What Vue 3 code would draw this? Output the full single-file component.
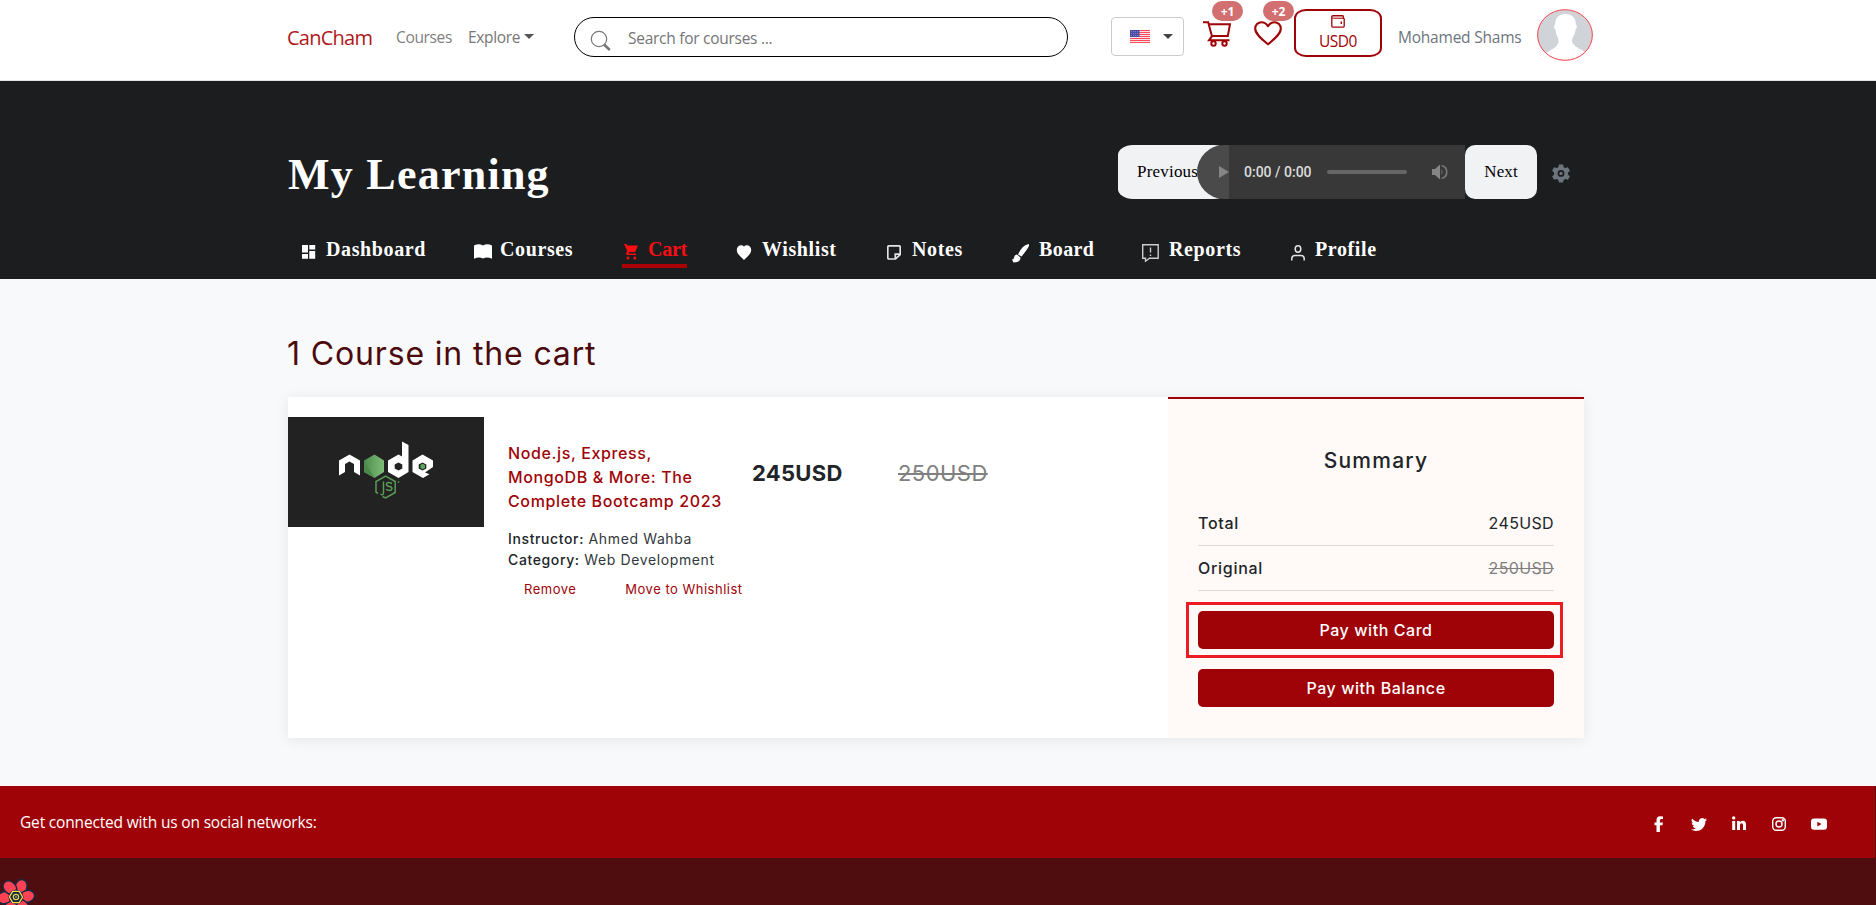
<script setup>
const tabs = [
  { id: 'dashboard', label: 'Dashboard' },
  { id: 'courses', label: 'Courses' },
  { id: 'cart', label: 'Cart' },
  { id: 'wishlist', label: 'Wishlist' },
  { id: 'notes', label: 'Notes' },
  { id: 'board', label: 'Board' },
  { id: 'reports', label: 'Reports' },
  { id: 'profile', label: 'Profile' },
]
const stripes = [0, 2, 4, 6, 8, 10, 12]
const petals = [0, 60, 120, 180, 240, 300]
</script>

<template>
  <div class="page">
    <header class="top">
      <a class="brand">CanCham</a>
      <a class="link courses">Courses</a>
      <a class="link explore">Explore<i class="caret"></i></a>
      <div class="search">
        <svg width="22" height="22" viewBox="0 0 22 22" fill="none" stroke="#777">
          <circle cx="9" cy="9" r="7.7" stroke-width="1.2" />
          <path d="M14 14.5 19.8 20" stroke-width="2.6" />
        </svg>
        <span>Search for courses ...</span>
      </div>
      <div class="lang">
        <svg width="20" height="13" viewBox="0 0 20 13">
          <rect width="20" height="13" fill="#ffe3e6" />
          <rect v-for="y in stripes" :key="y" :y="y" width="20" height="1" fill="#ff4a5c" />
          <rect width="9.5" height="7" fill="#4c4ca0" />
          <path d="M1 1.5h8M1 3.5h8M1 5.5h8" stroke="#8f8fd0" stroke-width=".7" stroke-dasharray="1 1" />
        </svg>
        <i class="caret"></i>
      </div>
      <div class="action cart-action">
        <svg width="28" height="26" viewBox="0 0 28 26" fill="none" stroke="#a00307" stroke-width="2">
          <path d="M0 1.2h5.2L9 15.5M6 3.2h21l-2.2 11.9H9L6 19.3h20.5" />
          <circle cx="10.5" cy="22.5" r="2.2" /><circle cx="21.5" cy="22.5" r="2.2" />
        </svg>
        <span class="badge">+1</span>
      </div>
      <div class="action heart-action">
        <svg width="28" height="25" viewBox="0 0 28 25" fill="none" stroke="#a00307" stroke-width="2.1" stroke-linejoin="round">
          <path d="M14 23.3C6 17 1.2 12.5 1.2 7.6 1.2 4 4 1.2 7.4 1.2c3 0 5.300 1.800 6.600 4C15.300 3 17.600 1.200 20.600 1.200 24 1.200 26.800 4 26.800 7.600c0 4.900-4.800 9.400-12.800 15.700z" />
        </svg>
        <span class="badge">+2</span>
      </div>
      <div class="wallet">
        <svg width="14" height="13" viewBox="0 0 14 13" fill="none" stroke="#a00307" stroke-width="1.3">
          <rect x=".8" y="3.300" width="12.400" height="8.800" rx=".8" />
          <path d="M.8 3.500V2Q.8.7 2 .7h9.500q.8 0 .8 .8v1.800" fill="#e3b3b4" />
          <path d="M10.300 6.500v2.500" stroke-width="1.400" />
        </svg>
        <span>USD0</span>
      </div>
      <span class="user">Mohamed Shams</span>
      <svg class="avatar" width="56" height="52" viewBox="0 0 56 52">
        <defs><clipPath id="face"><ellipse cx="28" cy="26" rx="27" ry="25" /></clipPath></defs>
        <ellipse cx="28" cy="26" rx="27.300" ry="25.300" fill="#d0d3d7" />
        <path clip-path="url(#face)" fill="#fff" d="M28.500 5c7 0 10.500 4.500 10.300 10.500 1.600.6 1.200 4-.3 5.500-.5 5-3.500 7.500-3.500 10.500 0 5 6 7 12 11V52H8V45c6-5 13.500-6 13.500-13 0-3.500-2.500-6-3-11-1.700-1.500-2-5-.2-5.600C18 9.500 21.500 5 28.500 5z" />
        <ellipse cx="28" cy="26" rx="27.400" ry="25.300" fill="none" stroke="#f8444a" />
      </svg>
    </header>

    <section class="hero">
      <div class="hero-row">
        <h1>My Learning</h1>
        <div class="player">
          <button class="prev">Previous</button>
          <div class="audio">
            <span class="knob"><i></i></span>
            <span class="time">0:00 / 0:00</span>
            <span class="track"></span>
            <svg width="17" height="16" viewBox="0 0 17 16">
              <path d="M1 5h3l5-4.500v15L4 11H1z" fill="#858585" />
              <path d="M10.500 5q2 3 0 6z" fill="#777" /><path d="M10.500 1.500c7 1.800 7 11.200 0 13" fill="none" stroke="#777" stroke-width="1.700" />
            </svg>
          </div>
          <button class="next">Next</button>
        </div>
        <svg class="gear" width="18" height="19" viewBox="0 0 18 19">
          <path fill="#6c757d" fill-rule="evenodd" d="M7 .5h4l.7 2.700 1.500.9 2.700-.8 2 3.400-2 2v1.700l2 2-2 3.400-2.700-.8-1.500.9-.7 2.700H7l-.7-2.700-1.500-.9-2.700.8-2-3.400 2-2V8.700l-2-2 2-3.400 2.700.8 1.500-.9zM9 6a3.400 3.400 0 1 0 0 6.800A3.400 3.400 0 0 0 9 6zM9 7.700a1.700 1.700 0 1 1 0 3.400 1.700 1.700 0 0 1 0-3.400z" />
        </svg>
      </div>
      <nav class="tabs">
        <a v-for="t in tabs" :key="t.id" :class="['tab', t.id, { active: t.id === 'cart' }]">
          <svg v-if="t.id === 'dashboard'" width="14" height="15" viewBox="0 0 14 15" fill="#fff"><path d="M0 1h6v7.500H0zM7.300 1h5.900v4.500H7.300zM0 10h6v4.800H0zM7.300 7h5.900v7.800H7.300z" /></svg>
          <svg v-else-if="t.id === 'courses'" width="18" height="15" viewBox="0 0 18 15" fill="#fff"><path d="M0 1.500Q5-1 9 1.500q4-2.500 9 0v13.300Q13 12.500 9 14.500 5 12.500 0 14.800z" /></svg>
          <svg v-else-if="t.id === 'cart'" width="14" height="16" viewBox="0 0 14 16" fill="#fb0d12"><path d="M0 0h2.400l.8 1.600H14L11.200 8H5l-.7 1.500H12V11H3Q1.500 10.500 2.300 9L3.300 7z" /><circle cx="4" cy="14" r="1.500" /><circle cx="10.800" cy="14" r="1.500" /></svg>
          <svg v-else-if="t.id === 'wishlist'" width="16" height="17" viewBox="0 0 16 17" fill="#fff"><path d="M8 2.500C6 0 .8 1 .8 6 .8 10 5 13 8 16c3-3 7.200-6 7.200-10C15.200 1 10 0 8 2.500z" /></svg>
          <svg v-else-if="t.id === 'notes'" width="14" height="17" viewBox="0 0 14 17" fill="none" stroke="#e4e4e4" stroke-width="1.700"><path d="M2 1.800h10q1.200 0 1.200 1.200v7.500L8.500 15H2Q.8 15 .8 13.800V3Q.8 1.800 2 1.800zM8.300 15v-4.800h4.900" /></svg>
          <svg v-else-if="t.id === 'board'" width="17" height="19" viewBox="0 0 17 19" fill="#fff"><path d="M17 0q1.500 2-7.500 12.500L6 10.500Q10 1 17 0zM5 10.500l3.500 3Q8.500 18.500 1.500 18.500L0 15.500q2 0 2-2 .5-2.800 3-3z" /></svg>
          <svg v-else-if="t.id === 'reports'" width="17" height="18" viewBox="0 0 17 18" fill="none" stroke="#ccc" stroke-width="1.400"><path d="M.7.7h15.500v13.500H7.500l-4 3v-3H.7z" /><path d="M8.500 3.500v5M8.500 10.500V12" /></svg>
          <svg v-else width="14" height="17" viewBox="0 0 14 17" fill="none" stroke="#e4e4e4" stroke-width="1.500"><ellipse cx="7" cy="5" rx="2.800" ry="3.200" /><path d="M.8 16.500V14.500Q1 11.500 4 11.500h6q3 0 3.200 3v2" /></svg>
          <span>{{ t.label }}</span>
        </a>
      </nav>
    </section>

    <main>
      <h2>1 Course in the cart</h2>
      <div class="card">
        <div class="items">
          <svg class="thumb" width="196" height="110" viewBox="0 0 196 110">
            <defs><linearGradient id="hex" x1="0" x2="1"><stop offset="0" stop-color="#4c8a4b" /><stop offset=".5" stop-color="#66a663" /><stop offset="1" stop-color="#7dbb78" /></linearGradient></defs>
            <rect width="196" height="110" fill="#222" />
            <path fill="#fff" fill-rule="evenodd" d="M51 58.500V43.500l10.500-6L72 43.500v15l-6-3.500V47l-4.500-2.500L57 47v8zM100 43.500l10.500-6 3.500 2V24.500l6.500 3.500V55L110.500 61 100 55zM110.500 45.500l-3.800 2v4l3.800 2 3.800-2v-4zM124.500 43.500l10-6 10.500 6V50l-8 5.500 4.500 1.800L135 61l-10.500-6zM134.500 45.500l-3.800 2v4l3.800 2 3.800-2v-4z" />
            <path d="M76 43.500l10.500-6L96 43.500V55L86.500 61 76 55z" fill="url(#hex)" />
            <path d="M76 43.500 86 60 76 55z" fill="#4a8b4c" />
            <path d="M134.700 46.800 137 48v3l-2.300 1.200-2.300-1.200v-3z" fill="#5fa75c" />
            <g fill="none" stroke="#599c56" stroke-width="1.500"><path d="M90 76.500 88 75.200V64.500l9.600-5.500 9.600 5.500V75.500L97.600 81l-3-1.500M95.500 64.500v11q0 3.500-3 1.500M104 66.500q-5-2.500-5.500.8.300 2 3 2.200 2.600.3 2.500 2.300-.8 3-6 .6" /></g>
            <circle cx="110.500" cy="65" r="1" fill="#487d46" />
          </svg>
          <div class="info">
            <p class="name">Node.js, Express,<br>MongoDB &amp; More: The<br><span>Complete Bootcamp 2023</span></p>
            <p class="meta"><b>Instructor:</b> Ahmed Wahba</p>
            <p class="meta"><b>Category:</b> Web Development</p>
            <div class="ops"><a>Remove</a><a>Move to Whishlist</a></div>
          </div>
          <span class="price">245USD</span>
          <s class="old">250USD</s>
        </div>
        <aside class="summary">
          <h3>Summary</h3>
          <div class="row"><b>Total</b><span>245USD</span></div>
          <div class="row"><b>Original</b><s>250USD</s></div>
          <div class="highlight"><button class="pay">Pay with Card</button></div>
          <button class="pay">Pay with Balance</button>
        </aside>
      </div>
    </main>

    <footer>
      <div class="social">
        <span>Get connected with us on social networks:</span>
        <div class="icons">
          <svg width="16" height="16" viewBox="0 0 16 16" fill="#fff"><path d="M5.500 16V9.300H3.500V6.400h2V4.200Q5.500.3 9 .2q1.500 0 3 .2v2.500h-1.700Q8.900 3 8.900 4.300v2.100h3l-.5 2.900H8.900V16z" /></svg>
          <svg width="16" height="16" viewBox="0 0 16 16" fill="#fff"><path d="M5.026 15c6.038 0 9.341-5.003 9.341-9.334 0-.14 0-.282-.006-.422A6.700 6.700 0 0 0 16 3.542a6.700 6.700 0 0 1-1.889.518 3.300 3.300 0 0 0 1.447-1.817 6.500 6.500 0 0 1-2.087.793A3.286 3.286 0 0 0 7.875 6.030a9.320 9.320 0 0 1-6.767-3.429 3.290 3.290 0 0 0 1.018 4.382A3.300 3.300 0 0 1 .64 6.575v.045a3.290 3.290 0 0 0 2.632 3.218 3.200 3.200 0 0 1-.865.115 3 3 0 0 1-.614-.057 3.280 3.280 0 0 0 3.067 2.277A6.600 6.600 0 0 1 .780 13.580a6 6 0 0 1-.780-.045A9.340 9.340 0 0 0 5.026 15" /></svg>
          <svg width="16" height="16" viewBox="0 0 16 16" fill="#fff"><circle cx="2.700" cy="1.900" r="1.700" /><path d="M1.200 4.900h3V14h-3zM6 4.900h2.800v1.300q1-1.500 2.900-1.500 3.300 0 3.300 4V14h-3V9.300q0-2-1.500-2Q9 7.400 9 9.300V14H6z" /></svg>
          <svg width="16" height="16" viewBox="0 0 16 16" fill="none" stroke="#fff" stroke-width="1.400"><rect x="1.700" y="1.700" width="12.600" height="12.600" rx="3.500" /><circle cx="8" cy="8" r="3" /><circle cx="11.800" cy="4.200" r=".5" /></svg>
          <svg width="16" height="16" viewBox="0 0 16 16"><rect y="2.500" width="16" height="11.300" rx="3" fill="#fff" /><path d="M6.300 5.800v4.600L10.500 8.100z" fill="#a00307" /></svg>
        </div>
      </div>
      <svg class="flower" width="38" height="26" viewBox="0 0 38 26">
        <g transform="translate(16 18)">
          <g v-for="a in petals" :key="a" :transform="`rotate(${a + 30})`"><path d="M-4.500-6C-8-11-7.500-16.500-2.500-18.500 4-19.500 7-11 4.500-6z" fill="#ff4154" stroke="#112a43" stroke-width="1.400" /></g>
          <path d="M-4-6.500h8L8 0 4 6.500h-8L-8 0z" fill="#112a43" />
          <path d="M-3.300-5.700h6.600L6.600 0 3.300 5.700h-6.600L-6.600 0z" fill="none" stroke="#ffd94c" stroke-width="1.300" />
          <circle r="2.700" fill="none" stroke="#e5d34c" stroke-width="1.200" /><circle r=".8" fill="#ffd94c" />
        </g>
      </svg>
    </footer>
  </div>
</template>

<style>
html, body { margin: 0; overflow: hidden; }
</style>

<style scoped>
.page { width: 1876px; height: 905px; overflow: hidden; background: #f8f9fb; color: #212529; font: 16px/24px "Open Sans", "Noto Sans", sans-serif; display: flex; flex-direction: column; }
.page * { box-sizing: border-box; white-space: nowrap; }
h1, h2, h3, p { margin: 0; }
svg { display: block; flex: none; }
button { border: 0; padding: 0; font: inherit; letter-spacing: inherit; }

.top { height: 81px; flex: none; background: #fff; border-bottom: 1px solid #dfe3e6; padding-left: 287px; display: flex; align-items: flex-start; }
.brand { width: 109px; margin-top: 25px; font-size: 20px; line-height: 26px; letter-spacing: -.75px; color: #b0171c; }
.link { margin-top: 25px; color: #7f7f7f; font-size: 15.500px; letter-spacing: -.35px; }
.link.courses { width: 72px; }
.explore { width: 106px; display: flex; gap: 4px; color: #777; }
.caret { display: block; width: 10px; height: 5px; background: #555; clip-path: polygon(0 0, 100% 0, 50% 100%); }
.explore .caret { margin-top: 9px; }
.search { width: 494px; height: 40px; margin-top: 17px; border: 1px solid #000; border-radius: 20px; display: flex; color: #757575; padding-left: 15px; gap: 16px; }
.search svg { margin-top: 12px; }
.search span { margin-top: 8px; font-size: 15.500px; letter-spacing: -.27px; }
.lang { width: 73px; height: 39px; margin: 17px 19px 0 43px; border: 1px solid #ccc; border-radius: 4px; display: flex; justify-content: space-between; padding: 12px 10px 0 18px; }
.lang .caret { margin-top: 4px; background: #444; }
.action { position: relative; padding-top: 21px; height: 60px; }
.cart-action { width: 51px; }
.heart-action { width: 40px; }
.badge { position: absolute; top: 1px; left: 9px; width: 31px; height: 20px; border-radius: 10px; background: #d27071; color: #fff; font: bold 12px/21px "Noto Sans", sans-serif; text-align: center; }
.wallet { width: 88px; height: 48px; margin: 9px 16px 0 0; border: 2px solid #a00307; border-radius: 12px / 9px; color: #a00307; display: flex; flex-direction: column; align-items: center; padding-top: 4px; }
.wallet span { font-size: 15.500px; letter-spacing: -.5px; line-height: 24px; margin-top: 1px; }
.user { width: 139px; margin-top: 25px; color: #6c757d; font-size: 15.500px; letter-spacing: -.22px; }
.avatar { margin-top: 9px; }

.hero { height: 198px; flex: none; background: #1c1d1f; padding: 64px 0 0 288px; font-family: "Liberation Serif", serif; }
.hero-row { display: flex; height: 54px; }
h1 { width: 830px; font-size: 44px; line-height: 60px; color: #fff; letter-spacing: 1.25px; }
.player { display: flex; width: 419px; }
.prev { width: 111px; background: #f1f2f4; border-radius: 15px / 10px; color: #000; font-size: 17px; letter-spacing: .2px; text-align: left; padding-left: 19px; }
.audio { width: 268px; margin-left: -32px; display: flex; align-items: center; border-radius: 27px 0 0 27px; background: linear-gradient(90deg, #4a4a4a 32px, #383838 32px); }
.knob { width: 47px; padding-left: 22px; }
.knob i { display: block; width: 10px; height: 12px; background: #858585; clip-path: polygon(0 0, 100% 50%, 0 100%); }
.time { width: 83px; color: #ddd; font: 500 14px Roboto, sans-serif; }
.track { width: 80px; height: 4px; border-radius: 2px; background: #666; margin-right: 24px; }
.next { width: 72px; background: #f1f2f4; border-radius: 10px; color: #000; font-size: 17px; letter-spacing: .1px; }
.gear { margin: 19px 0 0 15px; }
.tabs { display: grid; grid-template-columns: 172px 148px 114px 151px 125px 130px 149px 90px; margin: 36px 0 0 14px; color: #fff; font-size: 20px; font-weight: bold; letter-spacing: .62px; }
.tab { display: flex; height: 33px; justify-self: start; line-height: 28px; }
.tab svg { margin-top: 9px; }
.tab span { margin-left: 10px; }
.tab.courses span { margin-left: 8px; }
.tab.active { color: #fb0d12; border-bottom: 4px solid #ad0003; padding-left: 2px; letter-spacing: -.25px; }
.tab.board { letter-spacing: .4px; }
.tab.notes span { margin-left: 11px; }

main { height: 507px; flex: none; padding: 55px 0 0 287px; font-family: Inter, sans-serif; }
h2 { height: 63px; font-size: 32px; font-weight: 400; line-height: 40px; letter-spacing: .85px; color: #4c0a0c; }
.card { width: 1296px; height: 341px; margin-left: 1px; display: flex; background: #fff; box-shadow: 0 2px 14px rgba(0, 0, 0, .08); }
.items { width: 880px; display: flex; padding-top: 20px; }
.info { width: 244px; margin: 24px 0 0 24px; flex: none; }
.name { color: #a00307; font-size: 16px; font-weight: 500; line-height: 24px; letter-spacing: .63px; margin-bottom: 15px; }
.meta { font-size: 14px; line-height: 21px; letter-spacing: .62px; color: #31373c; }
.meta b { font-weight: 500; color: #212529; }
.ops { display: flex; gap: 49px; color: #a00307; font-size: 13px; line-height: 20px; letter-spacing: .5px; padding: 9px 0 0 16px; }
.price { width: 146px; font-size: 22px; font-weight: 700; letter-spacing: .3px; margin-top: 44px; }
.old { font-size: 22px; color: #808080; letter-spacing: .45px; margin-top: 44px; }
.summary { width: 416px; background: #fff9f7; border-top: 2px solid #a00307; padding: 50px 30px 0; }
h3 { font-size: 21px; line-height: 24px; font-weight: 500; letter-spacing: 1.25px; text-align: center; margin-bottom: 28px; }
.row { display: flex; justify-content: space-between; height: 45px; border-bottom: 1px solid #dedad9; line-height: 44px; letter-spacing: .35px; }
.row b { font-weight: 500; letter-spacing: .7px; }
.row s { color: #808080; }
.highlight { margin: 11px -9px 11px -12px; border: 3px solid #ed1c24; height: 56px; padding: 6px; padding-left: 9px; }
.pay { display: block; width: 356px; height: 38px; border-radius: 5px; background: #a00307; color: #fff; font-weight: 500; letter-spacing: .57px; }

footer { height: 119px; flex: none; background: #500d0f; }
.social { width: 1875px; height: 72px; background: #a00307; color: #fff; display: flex; justify-content: space-between; padding: 24px 48px 0 20px; }
.social span { font-size: 15.500px; letter-spacing: -.17px; }
.icons { display: flex; gap: 24px; padding-top: 6px; }
.flower { margin-top: 21px; }
</style>
